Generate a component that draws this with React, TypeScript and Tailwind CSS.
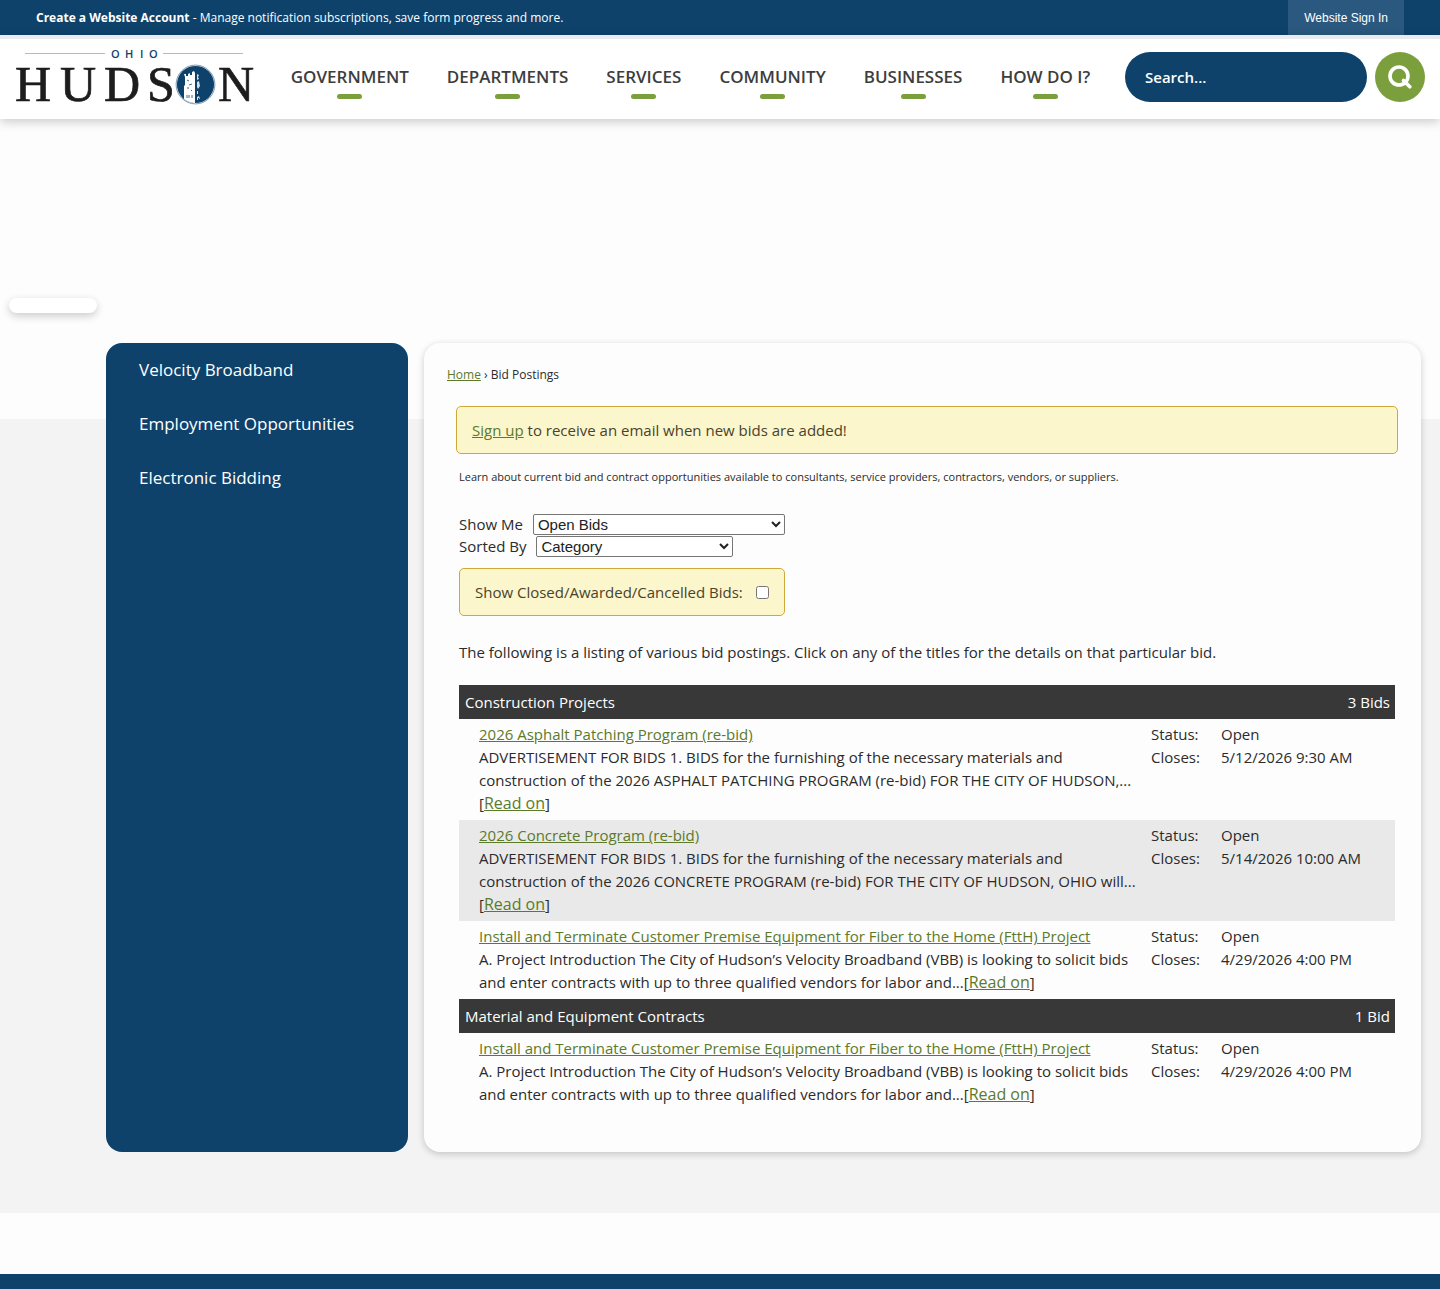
import { useState } from "react";

const navItems = ["Government", "Departments", "Services", "Community", "Businesses", "How Do I?"];

const sideItems = ["Velocity Broadband", "Employment Opportunities", "Electronic Bidding"];

const fiberBid = {
  title: "Install and Terminate Customer Premise Equipment for Fiber to the Home (FttH) Project",
  text: "A. Project Introduction The City of Hudson’s Velocity Broadband (VBB) is looking to solicit bids and enter contracts with up to three qualified vendors for labor and...",
  status: "Open",
  closes: "4/29/2026 4:00 PM",
};

const groups = [
  {
    name: "Construction Projects",
    count: "3 Bids",
    bids: [
      {
        title: "2026 Asphalt Patching Program (re-bid)",
        text: "ADVERTISEMENT FOR BIDS 1. BIDS for the furnishing of the necessary materials and construction of the 2026 ASPHALT PATCHING PROGRAM (re-bid) FOR THE CITY OF HUDSON,... ",
        status: "Open",
        closes: "5/12/2026 9:30 AM",
      },
      {
        title: "2026 Concrete Program (re-bid)",
        text: "ADVERTISEMENT FOR BIDS 1. BIDS for the furnishing of the necessary materials and construction of the 2026 CONCRETE PROGRAM (re-bid) FOR THE CITY OF HUDSON, OHIO will... ",
        status: "Open",
        closes: "5/14/2026 10:00 AM",
      },
      fiberBid,
    ],
  },
  { name: "Material and Equipment Contracts", count: "1 Bid", bids: [fiberBid] },
];

function Logo() {
  return (
    <svg viewBox="0 0 242 70" className="h-[70px] w-[242px] shrink-0" role="img" aria-label="Ohio Hudson">
      <path d="M11 11.5h80M149 11.5h80" stroke="#b5babd" strokeWidth="1" />
      <text x="97 111 126 135" y="16" fontFamily="Open Sans, sans-serif" fontWeight="600" fontSize="11" fill="#0e426b">
        OHIO
      </text>
      <text x="1 46 90 133" y="59" fontFamily="Liberation Serif, serif" fontSize="50" fill="#1d1d1d" stroke="#1d1d1d" strokeWidth="0.7">
        HUDS
      </text>
      <text x="204" y="59" fontFamily="Liberation Serif, serif" fontSize="50" fill="#1d1d1d" stroke="#1d1d1d" strokeWidth="0.7">
        N
      </text>
      <circle cx="181.5" cy="42.5" r="19.4" fill="#fff" stroke="#5d7f9b" strokeWidth="0.8" />
      <circle cx="181.5" cy="42.5" r="18.6" fill="#0e426b" />
      {/* clock tower */}
      <path d="M170 32l2 0v2h2v-2l2-1v2h2v-3l2-1 1 2v30q-6 0-11-4v-13l1-1v-8z" fill="#fff" />
      <path d="M183 32l2 1-1 2 1 2-2 1zM183 40l2-1 1 5-2 3-1-2zM183 49h1v3h-1zM183 55l2-1 1 3h-1v-1h-1v2h-1z" fill="#d3dee8" />
      <path d="M173 38l2 1M175 43l3-1M173 46h2M177 48l1 1M173 53v3M175 53v3M178 53v3" stroke="#0e426b" strokeWidth="0.8" />
    </svg>
  );
}

function Header() {
  return (
    <>
      <div className="flex h-[35px] items-stretch justify-between bg-[#0e426b] px-9 text-xs text-white">
        <p className="self-center">
          <a href="#account" className="font-bold">Create a Website Account</a> - Manage notification subscriptions, save form progress and more.
        </p>
        <a href="#signin" className="flex items-center bg-[#2a587e] px-4 font-['Liberation_Sans',sans-serif]">
          Website Sign In
        </a>
      </div>
      <header className="relative flex h-[84px] items-center border-t-4 border-[#e9ebee] bg-white pr-[15px] pb-1 pl-[14px] shadow-[0_3px_10px_rgba(0,0,0,0.2)]">
        <a href="#home"><Logo /></a>
        <nav className="flex flex-1 justify-center gap-[38px]">
          {navItems.map((item) => (
            <a key={item} href="#nav" className="flex flex-col items-center pt-[9px] text-[17px] font-semibold whitespace-nowrap text-[#3d3d3d] uppercase">
              {item}
              <span className="mt-[6px] h-[5px] w-[25px] rounded-full bg-[#7a9f3c]" />
            </a>
          ))}
        </nav>
        <form className="flex gap-2" onSubmit={(e) => e.preventDefault()}>
          <input
            type="text"
            aria-label="Search"
            placeholder="Search..."
            className="h-[50px] w-[242px] rounded-full bg-[#0e426b] px-5 text-[15px] font-semibold text-white outline-none placeholder:text-white"
          />
          <button type="submit" aria-label="Search" className="flex size-[50px] items-center justify-center rounded-full bg-[#7a9f3c]">
            <svg viewBox="0 0 24 24" className="size-6" fill="none" stroke="#fff" strokeWidth="3.6">
              <circle cx="11" cy="11" r="9" />
              <path d="M15.5 15.5l6.3 6.3" strokeLinecap="round" />
            </svg>
          </button>
        </form>
      </header>
    </>
  );
}

function BidTable() {
  return (
    <table className="w-full table-fixed border-collapse text-left">
      <colgroup>
        <col />
        <col className="w-[70px]" />
        <col className="w-[174px]" />
      </colgroup>
      {groups.map((group) => (
        <tbody key={group.name}>
          <tr className="bg-[#383838] text-white">
            <th colSpan={2} className="h-[34px] px-[6px] font-normal">{group.name}</th>
            <td className="h-[34px] px-[5px] text-right">{group.count}</td>
          </tr>
          {group.bids.map((bid, i) => (
            <tr key={bid.title} className={i % 2 ? "bg-[#e9e9e9] align-top" : "align-top"}>
              <td className="pt-1 pr-1 pb-[5px] pl-5">
                <a href="#bid" className="text-[#5b7a2a] underline">{bid.title}</a>
                <p>
                  {bid.text}[<a href="#bid" className="text-base leading-none text-[#5b7a2a] underline">Read on</a>]
                </p>
              </td>
              <td className="pt-1">Status:<br />Closes:</td>
              <td className="pt-1">{bid.status}<br />{bid.closes}</td>
            </tr>
          ))}
        </tbody>
      ))}
    </table>
  );
}

export default function App() {
  const [showClosed, setShowClosed] = useState(false);

  return (
    <div className="min-h-screen bg-[#fdfdfd] font-['Open_Sans',sans-serif] text-[15px] leading-[23px] text-[#2b2b2b]">
      <Header />

      <div className="h-[300px] px-[9px] pt-[179px]">
        <div className="h-[15px] w-[88px] rounded-full bg-white shadow-[0_3px_8px_rgba(0,0,0,0.2)]" />
      </div>

      <main className="bg-[#f3f3f3] pr-[19px] pb-[61px] pl-[106px]">
        <div className="relative -top-[76px] -mb-[76px] flex gap-4">
          <aside className="w-[302px] shrink-0 rounded-2xl bg-[#0e426b] pt-[13px] pl-[33px] text-[17px] leading-7 text-white">
            <ul className="space-y-[26px]">
              {sideItems.map((item) => (
                <li key={item}><a href="#side">{item}</a></li>
              ))}
            </ul>
          </aside>

          <section className="min-w-0 flex-1 rounded-2xl bg-[#fdfdfd] px-[23px] pt-5 pb-[41px] shadow-[0_2px_7px_rgba(0,0,0,0.2)]">
            <p className="text-xs leading-6">
              <a href="#home" className="text-[#5b7a2a] underline">Home</a> › Bid Postings
            </p>

            <div className="mt-[19px] ml-[9px] rounded-[5px] border border-[#cfa83a] bg-[#fcf6cd] px-[15px] py-3 leading-[22px] text-[#4a432b]">
              <p><a href="#signup" className="text-[#5b7a2a] underline">Sign up</a> to receive an email when new bids are added!</p>
            </div>

            <div className="pr-[3px] pl-3">
              <p className="mt-[11px] text-[11px]">
                Learn about current bid and contract opportunities available to consultants, service providers, contractors, vendors, or suppliers.
              </p>

              <div className="mt-[25px] flex items-center leading-[22px]">
                <label htmlFor="show-me" className="mr-[10px]">Show Me</label>
                <select id="show-me" className="h-[21px] w-[252px] appearance-auto rounded-xs border border-[#767676] bg-white font-['Liberation_Sans',sans-serif] text-[15px] leading-none text-[#222]">
                  <option>Open Bids</option>
                  <option>Closed Bids</option>
                </select>
              </div>
              <div className="flex items-center leading-[22px]">
                <label htmlFor="sorted-by" className="mr-[10px]">Sorted By</label>
                <select id="sorted-by" className="h-[21px] w-[197px] appearance-auto rounded-xs border border-[#767676] bg-white font-['Liberation_Sans',sans-serif] text-[15px] leading-none text-[#222]">
                  <option>Category</option>
                  <option>Closing Date</option>
                </select>
              </div>

              <label className="mt-[11px] flex w-[326px] items-center justify-between rounded-[5px] border border-[#cfa83a] bg-[#fcf6cd] px-[15px] py-3 leading-[22px] text-[#4a432b]">
                Show Closed/Awarded/Cancelled Bids:
                <input type="checkbox" checked={showClosed} onChange={(e) => setShowClosed(e.target.checked)} className="size-[13px]" />
              </label>

              <p className="mt-[25px] mb-[21px]">
                The following is a listing of various bid postings. Click on any of the titles for the details on that particular bid.
              </p>

              <BidTable />
            </div>
          </section>
        </div>
      </main>

      <footer className="pt-[61px]">
        <div className="h-[15px] bg-[#0e426b]" />
      </footer>
    </div>
  );
}
